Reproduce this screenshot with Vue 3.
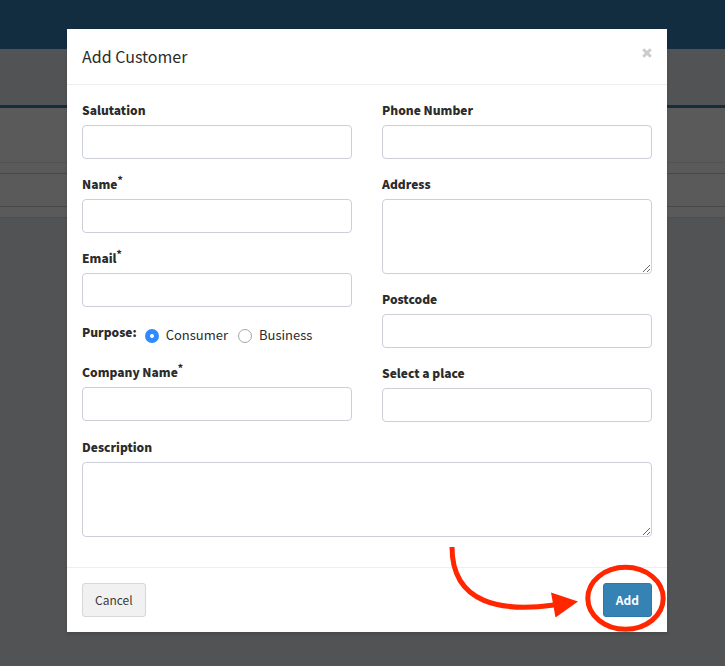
<script setup>
import { reactive } from 'vue'

const form = reactive({
  salutation: '',
  name: '',
  email: '',
  purpose: 'consumer',
  company: '',
  phone: '',
  address: '',
  postcode: '',
  place: '',
  description: '',
})
</script>

<template>
  <div class="screen">
    <div class="page" aria-hidden="true">
      <div class="navbar"></div>
      <div class="titlebar"></div>
      <div class="panel">
        <div class="panel-head"></div>
        <div class="panel-gap"></div>
        <div class="panel-row"></div>
      </div>
    </div>

    <div class="overlay">
      <form class="modal" role="dialog" aria-labelledby="modal-title" @submit.prevent>
        <header class="modal-header">
          <h4 id="modal-title" class="title">Add Customer</h4>
          <button type="button" class="close" aria-label="Close">
            <svg viewBox="0 0 10 10" width="10" height="10">
              <path d="M1.2 1.2L8.8 8.8M8.8 1.2L1.2 8.8" fill="none" stroke="currentColor" stroke-width="3" />
            </svg>
          </button>
        </header>

        <div class="modal-body">
          <div class="columns">
            <div class="column">
              <div class="group">
                <label for="salutation">Salutation</label>
                <input id="salutation" v-model="form.salutation" class="control" type="text" />
              </div>
              <div class="group">
                <label for="name">Name<sup>*</sup></label>
                <input id="name" v-model="form.name" class="control" type="text" />
              </div>
              <div class="group">
                <label for="email">Email<sup>*</sup></label>
                <input id="email" v-model="form.email" class="control" type="email" />
              </div>
              <div class="purpose" role="radiogroup" aria-labelledby="purpose-label">
                <span id="purpose-label" class="purpose-label">Purpose:</span>
                <div class="options">
                  <label class="option">
                    <input v-model="form.purpose" class="radio" type="radio" name="purpose" value="consumer" />
                    Consumer
                  </label>
                  <label class="option">
                    <input v-model="form.purpose" class="radio" type="radio" name="purpose" value="business" />
                    Business
                  </label>
                </div>
              </div>
              <div class="group">
                <label for="company">Company Name<sup>*</sup></label>
                <input id="company" v-model="form.company" class="control" type="text" />
              </div>
            </div>

            <div class="column">
              <div class="group">
                <label for="phone">Phone Number</label>
                <input id="phone" v-model="form.phone" class="control" type="tel" />
              </div>
              <div class="group">
                <label for="address">Address</label>
                <textarea id="address" v-model="form.address" class="control area"></textarea>
              </div>
              <div class="group">
                <label for="postcode">Postcode</label>
                <input id="postcode" v-model="form.postcode" class="control" type="text" />
              </div>
              <div class="group">
                <label for="place">Select a place</label>
                <input id="place" v-model="form.place" class="control" type="text" />
              </div>
            </div>
          </div>

          <div class="group">
            <label for="description">Description</label>
            <textarea id="description" v-model="form.description" class="control area"></textarea>
          </div>
        </div>

        <footer class="modal-footer">
          <button type="button" class="btn btn-default">Cancel</button>
          <button type="submit" class="btn btn-primary">Add</button>
        </footer>

        <svg class="callout" viewBox="0 0 227 92" width="227" height="92" aria-hidden="true">
          <path d="M12 7C12 65 63 72 114 65" fill="none" stroke="#ff2600" stroke-width="5" />
          <path d="M111 52.5L138 61.5L115.5 77.5Z" fill="#ff2600" />
          <ellipse cx="185.5" cy="58.3" rx="37.7" ry="31" fill="none" stroke="#ff2600" stroke-width="5" />
        </svg>
      </form>
    </div>
  </div>
</template>

<style>
body {
  margin: 0;
  background: #525355;
}
</style>

<style scoped>
.screen {
  display: grid;
  min-height: 100vh;
  font-family: "Noto Sans CJK SC", "Noto Sans", sans-serif;
  font-size: 12px;
  line-height: 20px;
  color: #2b2b2b;
}

.screen *,
.screen *::before {
  box-sizing: border-box;
}

.page,
.overlay {
  grid-area: 1 / 1;
  min-width: 0;
}

.page {
  background: #525355;
}

.navbar {
  height: 49px;
  background: #132d40;
}

.titlebar {
  height: 59px;
  border-bottom: 3px solid #132d40;
}

.panel {
  background: #5a5a5a;
  border-bottom: 1px solid #4e4e4e;
}

.panel-head {
  height: 55px;
  border-bottom: 1px solid #525252;
}

.panel-gap {
  height: 10px;
}

.panel-row {
  height: 34px;
  margin-bottom: 10px;
  border: solid #484849;
  border-width: 1px 0;
}

.overlay {
  padding: 29px 58px 34px 67px;
}

.modal {
  position: relative;
  max-width: 600px;
  margin: 0 auto;
  background: #fff;
  box-shadow: 0 2px 3px rgba(0, 0, 0, 0.125);
}

.modal-header {
  display: flex;
  justify-content: space-between;
  align-items: flex-start;
  padding: 15px;
  border-bottom: 1px solid #eee;
}

.title {
  margin: 0;
  font-size: 16px;
  font-weight: 400;
  line-height: 25px;
}

.close {
  display: flex;
  padding: 4px 0;
  border: 0;
  background: none;
  color: #ccc;
}

.modal-body {
  padding: 15px;
}

.columns {
  display: grid;
  grid-template-columns: 1fr 1fr;
  column-gap: 30px;
}

.group {
  display: flex;
  flex-direction: column;
  gap: 5px;
  margin-bottom: 15px;
}

.group label,
.purpose-label {
  font-weight: 900;
}

sup {
  position: relative;
  top: -5px;
  font-size: 10px;
  line-height: 0;
  vertical-align: baseline;
}

.control {
  width: 100%;
  height: 34px;
  margin: 0;
  padding: 6px 12px;
  border: 1px solid #cccfd9;
  border-radius: 4px;
  background: #fff;
  color: inherit;
  font: inherit;
}

.area {
  height: 75px;
  resize: vertical;
}

.purpose {
  display: flex;
  gap: 8px;
  height: 40px;
}

.options {
  display: flex;
  gap: 10px;
  padding-top: 4px;
}

.option {
  display: flex;
  gap: 7px;
  align-items: flex-start;
  font-size: 13px;
  line-height: 18px;
}

.radio {
  appearance: none;
  width: 14px;
  height: 14px;
  margin: 3px 0 0;
  border: 1px solid #a6a6a6;
  border-radius: 50%;
  background: #fff;
}

.radio:checked {
  border: 5px solid #2f8bff;
}

.modal-footer {
  display: flex;
  justify-content: space-between;
  padding: 15px;
  border-top: 1px solid #eee;
}

.btn {
  height: 34px;
  padding: 0 12px;
  border: 1px solid;
  border-radius: 3px;
  font: inherit;
}

.btn-default {
  border-color: #d6d8d8;
  background: #f1f1f1;
  color: #3a3a3a;
}

.btn-primary {
  border-color: #2e77a8;
  background: #3582b5;
  color: #fff;
  font-weight: 700;
}

.callout {
  position: absolute;
  right: 0;
  bottom: 0;
  overflow: visible;
  pointer-events: none;
}
</style>
